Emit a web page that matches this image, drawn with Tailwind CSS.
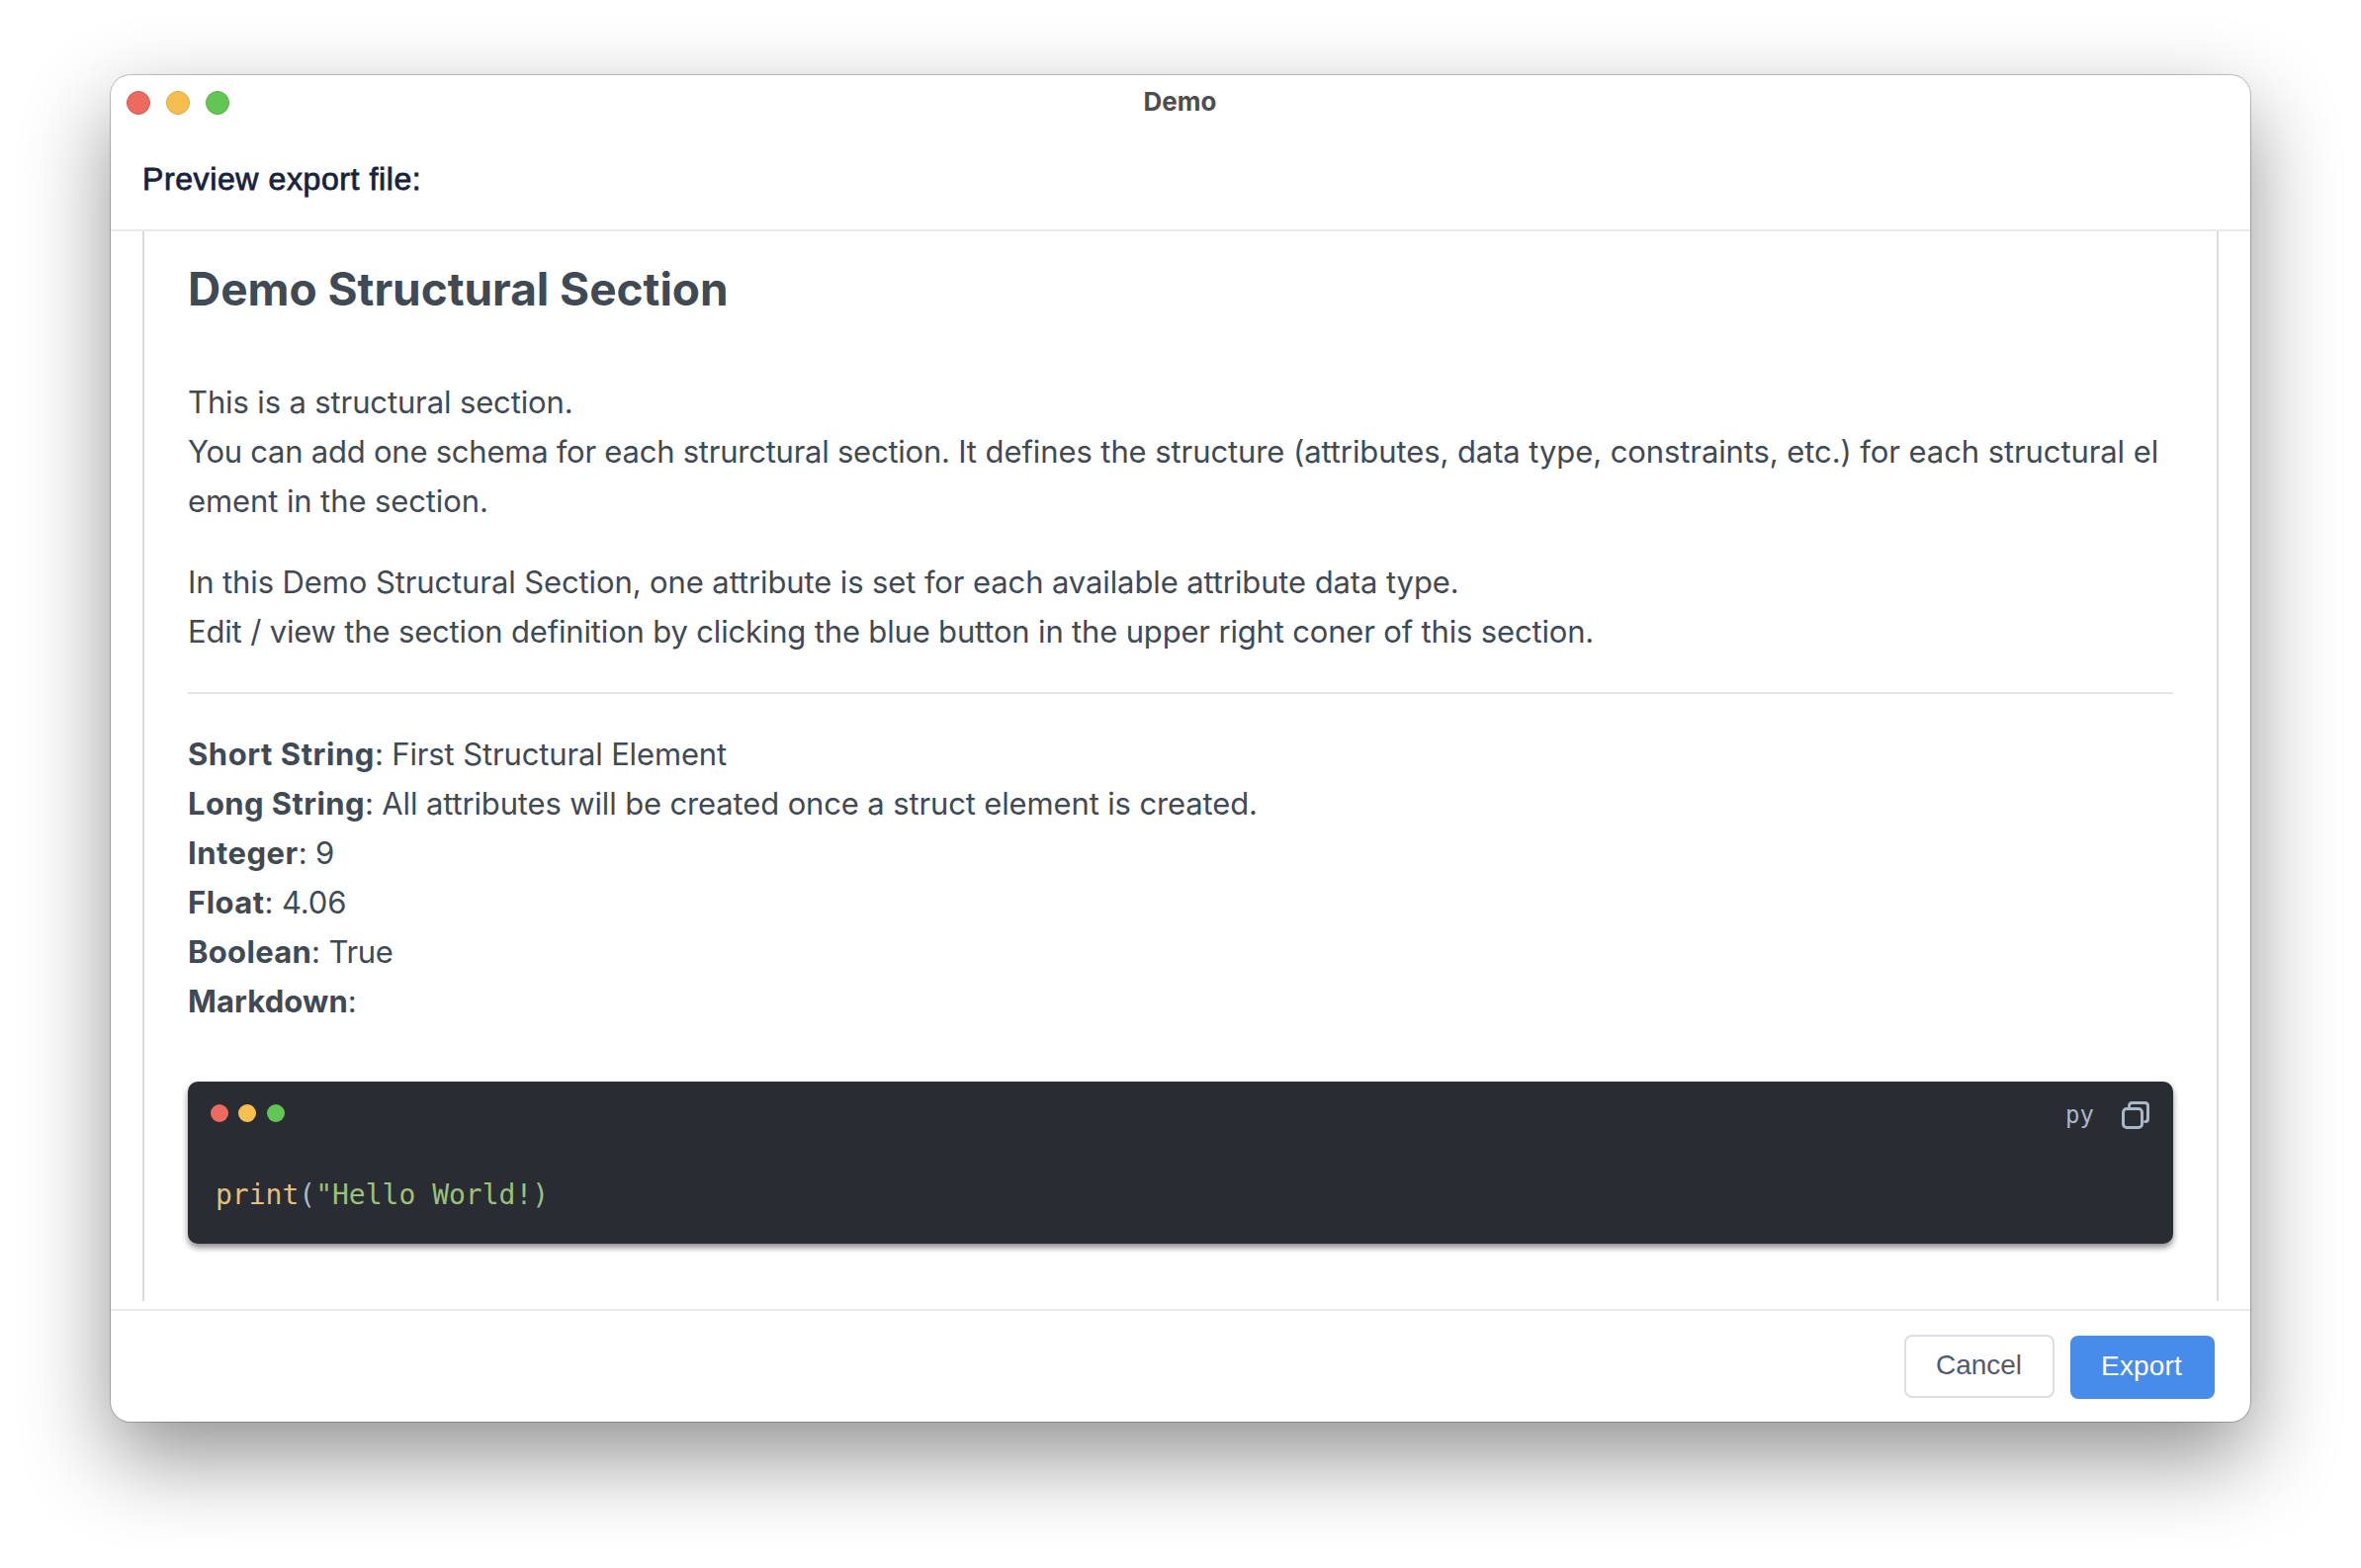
<!DOCTYPE html>
<html lang="en">
<head>
<meta charset="utf-8">
<title>Demo</title>
<script src="https://cdn.jsdelivr.net/npm/@tailwindcss/browser@4"></script>
</head>
<body class="h-screen overflow-hidden bg-white pl-[112px] pt-[76px] font-['Inter',sans-serif]">
<div class="flex h-[1362px] w-[2164px] flex-col rounded-[20px] bg-white shadow-[0_0_0_1px_rgba(0,0,0,0.22),0_36px_88px_rgba(0,0,0,0.43)]">

  <!-- Title bar -->
  <div class="grid h-14 shrink-0 grid-cols-3 px-4">
    <div class="flex items-center gap-4">
      <span class="size-6 rounded-full border border-[#d9574d] bg-[#ed6a5e]"></span>
      <span class="size-6 rounded-full border border-[#dba640] bg-[#f5bf4f]"></span>
      <span class="size-6 rounded-full border border-[#55ad44] bg-[#62c655]"></span>
    </div>
    <div class="pr-px text-center text-[26px] leading-[54px] font-bold text-[#4d4d4d]">Demo</div>
  </div>

  <!-- Header -->
  <header class="flex h-[102px] shrink-0 items-center border-b-2 border-[#e8e8e8] px-8 pb-0.5">
    <h1 class="font-['Liberation_Sans',sans-serif] text-[32px] tracking-[0.6px] text-[#17233d] [-webkit-text-stroke:0.8px_#17233d]">Preview export file:</h1>
  </header>

  <!-- Preview -->
  <main class="mx-8 h-[1082px] shrink-0 border-x-2 border-[#dcdcdc] px-11 pt-[29px] text-[31px] leading-[50px] text-[#3f4a54]">
    <h2 class="text-[46px] leading-[58px] font-bold tracking-[-0.04px]">Demo Structural Section</h2>
    <p class="mt-[61px] whitespace-nowrap">
      <span class="tracking-[-0.13px]">This is a structural section.</span><br>
      <span class="tracking-[-0.24px]">You can add one schema for each strurctural section. </span><span class="tracking-[-0.09px]">It defines the structure (attributes, data type, constraints, etc.) for each structural el</span><br>
      <span class="tracking-[-0.1px]">ement in the section.</span>
    </p>
    <p class="mt-8 whitespace-nowrap">
      <span class="tracking-[-0.11px]">In this Demo Structural Section, one attribute is set for each available attribute data type.</span><br>
      <span class="tracking-[-0.17px]">Edit / view the section definition by clicking the blue button in the upper right coner of this section.</span>
    </p>
    <hr class="my-9 border-t-2 border-[#e6e6e6]">
    <ul class="tracking-[-0.14px]">
      <li><b class="tracking-[0.55px]">Short String</b>: First Structural Element</li>
      <li><b class="tracking-[0.4px]">Long String</b>: All attributes will be created once a struct element is created.</li>
      <li><b class="tracking-[0.5px]">Integer</b>: 9</li>
      <li><b class="tracking-[0.45px]">Float</b>: 4.06</li>
      <li><b class="tracking-[0.3px]">Boolean</b>: <span class="tracking-[-0.3px]">True</span></li>
      <li><b class="tracking-[0.1px]">Markdown</b>:</li>
    </ul>

    <!-- Code block -->
    <div class="mt-14 flex h-[164px] flex-col rounded-[10px] bg-[#2a2c34] font-['DejaVu_Sans_Mono',monospace] shadow-[0_4px_6px_rgba(0,0,0,0.45)]">
      <div class="flex h-[95px] items-start justify-between pr-6 pl-[22.5px]">
        <div class="flex gap-[10.5px] pt-[22.5px]">
          <span class="size-[18px] rounded-full bg-[#ed6a5e]"></span>
          <span class="size-[18px] rounded-full bg-[#f8be50]"></span>
          <span class="size-[18px] rounded-full bg-[#62c655]"></span>
        </div>
        <div class="flex items-start gap-7 pt-5 text-[#a9b7c6]">
          <span class="text-2xl leading-7">py</span>
          <svg class="h-7 w-7" viewBox="0 0 28 28" fill="none" stroke="currentColor" stroke-width="3" stroke-linecap="round">
            <rect x="1.5" y="7.5" width="19" height="19" rx="3.6"/>
            <path d="M7.5 4.8C7.5 2.7 8.6 1.5 10.6 1.5H23.4C25.4 1.5 26.5 2.6 26.5 4.6V17.4C26.5 19.4 25.4 20.5 23.6 20.5"/>
          </svg>
        </div>
      </div>
      <pre class="pl-7 font-['DejaVu_Sans_Mono',monospace] text-[28px] leading-10 text-[#a9b7c6]"><code class="font-['DejaVu_Sans_Mono',monospace]"><span class="text-[#e3c07c]">print</span>(<span class="text-[#9cc07c]">"Hello World!)</span></code></pre>
    </div>
  </main>

  <!-- Footer -->
  <footer class="mt-2 flex grow justify-end gap-4 border-t-2 border-[#e8e8e8] pt-6 pr-9 font-['Liberation_Sans',sans-serif] text-[28px] leading-none">
    <button class="h-16 w-[152px] rounded-lg border-2 border-[#dcdee2] pr-px pb-0.5 text-[#515a6e]">Cancel</button>
    <button class="mt-px h-16 w-[146px] rounded-lg bg-[#478cea] pr-0.5 pb-0.5 tracking-[0.15px] text-white">Export</button>
  </footer>
</div>
</body>
</html>
